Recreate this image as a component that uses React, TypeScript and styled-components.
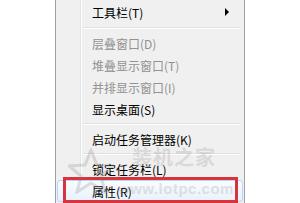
import styled, { createGlobalStyle } from 'styled-components'

const GlobalStyle = createGlobalStyle`
	html, body {
		margin: 0;
		padding: 0;
		background: #ffffff;
	}
	body {
		font-family: "Noto Sans CJK SC", "Noto Sans", sans-serif;
	}
`;

const Page = styled.div`
	width: 300px;
	height: 203px;
	overflow: hidden;
	background: #ffffff;
`;

const Menu = styled.div`
	position: relative;
	margin-left: 55px;
	width: 188px;
	border-left: 1px solid #a0a0a0;
	border-right: 1px solid #a0a0a0;
	background-color: #f0f0f0;
	background-image: linear-gradient(
		to right,
		transparent 24px,
		#e2e3e3 24px,
		#e2e3e3 25px,
		#ffffff 25px,
		#ffffff 26px,
		transparent 26px
	);
	padding-bottom: 2px;
`;

const Item = styled.div<{ $disabled?: boolean; $hover?: boolean; $height?: number }>`
	position: relative;
	box-sizing: border-box;
	height: ${(p) => p.$height ?? 22}px;
	display: flex;
	align-items: center;
	padding-left: 34px;
	padding-right: 12px;
	font-size: 12px;
	color: ${(p) => (p.$disabled ? '#929292' : '#000000')};
	background: ${(p) => (p.$hover ? 'linear-gradient(#fafcfe, #e8f1fc)' : 'transparent')};
	border: 1px solid ${(p) => (p.$hover ? '#b8d6fb' : 'transparent')};
	border-radius: 3px;
	margin: 0 1px;
`;

const Label = styled.span`
	flex: 1;
	white-space: nowrap;
`;

const Arrow = styled.span`
	width: 0;
	height: 0;
	border-top: 4px solid transparent;
	border-bottom: 4px solid transparent;
	border-left: 4px solid #000000;
	margin-right: 1px;
`;

const Separator = styled.div`
	height: 8px;
	display: flex;
	flex-direction: column;
	justify-content: center;
	margin-left: 27px;
	margin-right: 3px;

	&::before {
		content: '';
		display: block;
		border-top: 1px solid #e0e0e0;
		border-bottom: 1px solid #ffffff;
	}
`;

const Highlight = styled.div`
	position: absolute;
	left: 5px;
	right: 4px;
	top: -4px;
	bottom: -2px;
	border: 3px solid #d6353d;
	pointer-events: none;
`;

/* faint site watermark lying over the menu */
const Watermark = styled.div`
	position: absolute;
	left: 12px;
	top: 136px;
	width: 176px;
	height: 66px;
	pointer-events: none;
	opacity: 0.22;
	color: #8a8a8a;
	font-family: "Liberation Sans", Arial, sans-serif;
	font-weight: bold;
`;

const WaterTitle = styled.div`
	position: absolute;
	left: 64px;
	top: 6px;
	font-family: "Noto Sans CJK SC", sans-serif;
	font-size: 20px;
	letter-spacing: 1px;
`;

const WaterUrl = styled.div`
	position: absolute;
	left: 50px;
	top: 44px;
	font-size: 15px;
	letter-spacing: 0.5px;
`;

const Star = styled.svg`
	position: absolute;
	left: 0;
	top: 12px;
`;

function App() {
	return (
		<Page>
			<GlobalStyle />
			<Menu>
				<Item $height={24}>
					<Label>工具栏(T)</Label>
					<Arrow />
				</Item>
				<Separator />
				<Item $disabled>
					<Label>层叠窗口(D)</Label>
				</Item>
				<Item $disabled>
					<Label>堆叠显示窗口(T)</Label>
				</Item>
				<Item $disabled>
					<Label>并排显示窗口(I)</Label>
				</Item>
				<Item>
					<Label>显示桌面(S)</Label>
				</Item>
				<Separator />
				<Item>
					<Label>启动任务管理器(K)</Label>
				</Item>
				<Separator />
				<Item>
					<Label>锁定任务栏(L)</Label>
				</Item>
				<Item $hover>
					<Label>属性(R)</Label>
					<Highlight />
				</Item>
				<Watermark>
					<Star width="46" height="46" viewBox="0 0 46 46">
						<polygon
							points="23,2 29,17 45,18 33,28 37,44 23,35 9,44 13,28 1,18 17,17"
							fill="none"
							stroke="#777"
							strokeWidth="3"
						/>
					</Star>
					<WaterTitle>装机之家</WaterTitle>
					<WaterUrl>www.lotpc.com</WaterUrl>
				</Watermark>
			</Menu>
		</Page>
	);
}

export default App;
